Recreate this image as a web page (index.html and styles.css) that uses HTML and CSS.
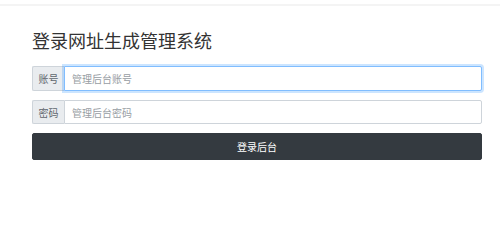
FILE: index.html
```html
<!DOCTYPE html>
<html lang="zh-CN">
<head>
<meta charset="utf-8">
<title>登录网址生成管理系统</title>
<link rel="stylesheet" href="styles.css">
</head>
<body>
<div class="topbar"></div>
<main class="main">
  <h1 class="title">登录网址生成管理系统</h1>
  <form class="login-form">
    <div class="input-group">
      <span class="addon">账号</span>
      <input class="field field-focus" type="text" placeholder="管理后台账号" autofocus>
    </div>
    <div class="input-group input-group-sm">
      <span class="addon">密码</span>
      <input class="field" type="password" placeholder="管理后台密码">
    </div>
    <button class="submit" type="button">登录后台</button>
  </form>
</main>
</body>
</html>
```
FILE: styles.css
```css
html, body {
  margin: 0;
  padding: 0;
  background: #fff;
}
body {
  font-family: "Noto Sans CJK SC", "Noto Sans", sans-serif;
  color: #212529;
}
.topbar {
  height: 4px;
  border-bottom: 2px solid #f4f4f4;
}
.main {
  padding: 0 18px 0 32px;
}
.title {
  margin: 23px 0 15px;
  font-size: 18px;
  line-height: 22px;
  font-weight: 400;
  color: #333;
}
.login-form {
  display: flex;
  flex-direction: column;
  gap: 9px;
}
.input-group {
  display: flex;
  height: 25px;
}
.input-group-sm {
  height: 24px;
}
.addon {
  display: flex;
  align-items: center;
  justify-content: center;
  width: 32px;
  flex: 0 0 32px;
  background: #e9ecef;
  border: 1px solid #ced4da;
  border-right: none;
  border-radius: 2px 0 0 2px;
  font-size: 10px;
  color: #5f666d;
  box-sizing: border-box;
}
.field {
  flex: 1;
  min-width: 0;
  margin: 0;
  padding: 0 7px;
  border: 1px solid #ced4da;
  border-radius: 0 2px 2px 0;
  font-family: "Noto Sans CJK SC", "Noto Sans", sans-serif;
  font-size: 10px;
  color: #495057;
  background: #fff;
  box-sizing: border-box;
  outline: none;
}
.field::placeholder {
  color: #979da3;
}
.field-focus {
  border-color: #80bdff;
  box-shadow: 0 0 0 2px rgba(0, 123, 255, 0.2);
}
.submit {
  height: 27px;
  border: 1px solid #343a40;
  border-radius: 2px;
  background: #343a40;
  color: #fff;
  font-family: "Noto Sans CJK SC", "Noto Sans", sans-serif;
  font-size: 10px;
  padding: 0;
}
```
